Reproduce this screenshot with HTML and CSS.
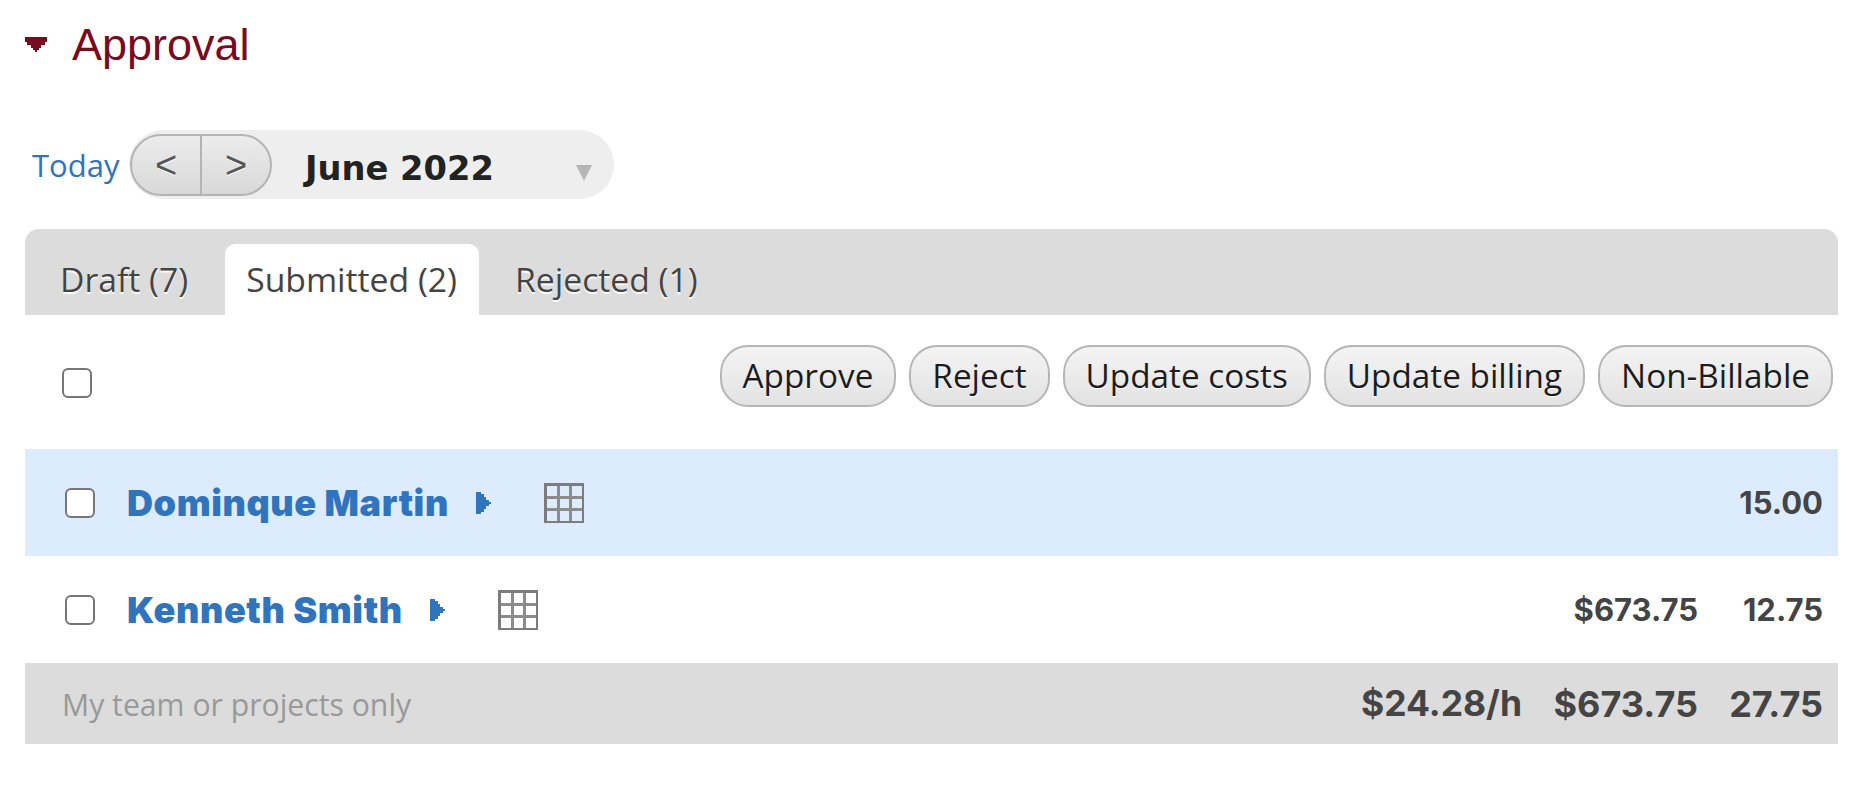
FILE: index.html
```html
<!DOCTYPE html>
<html lang="en">
<head>
<meta charset="utf-8">
<title>Approval</title>
<link rel="stylesheet" href="styles.css">
</head>
<body>
<header class="title">
  <svg class="title-caret" width="22" height="15" viewBox="0 0 22 15" shape-rendering="crispEdges"><path d="M0 0H22V5H20V8H16V11H14V13H12V15H10V13H8V11H6V8H2V5H0Z"/></svg>
  <h1>Approval</h1>
</header>
<nav class="period">
  <a class="today">Today</a>
  <div class="pill">
    <div class="stepper"><span class="step">&lt;</span><span class="step">&gt;</span></div>
    <strong class="month">June 2022</strong>
    <svg class="month-caret" width="16" height="16" viewBox="0 0 16 16"><path d="M0 0H16L8 16Z"/></svg>
  </div>
</nav>
<section class="panel">
  <div class="tabs">
    <span class="tab">Draft (7)</span>
    <span class="tab active">Submitted (2)</span>
    <span class="tab">Rejected (1)</span>
  </div>
  <div class="toolbar">
    <span class="check head-check"></span>
    <div class="actions">
      <button class="btn">Approve</button>
      <button class="btn">Reject</button>
      <button class="btn">Update costs</button>
      <button class="btn">Update billing</button>
      <button class="btn">Non-Billable</button>
    </div>
  </div>
  <div class="row hl">
    <span class="check"></span>
    <a class="name">Dominque Martin</a>
    <svg class="arrow" width="15" height="22" viewBox="0 0 15 22" shape-rendering="crispEdges"><path d="M0 0H5V2H8V5H10V8H13V10H15V12H13V14H10V17H8V20H5V22H0Z"/></svg>
    <svg class="grid" width="40" height="40" viewBox="0 0 40 40" shape-rendering="crispEdges"><path class="grid-inner" d="M14 0V40M26 0V40M0 14H40M0 26H40"/><rect class="grid-outer" x="1" y="1" width="38" height="38"/></svg>
    <span class="num amt"></span>
    <span class="num hrs">15.00</span>
  </div>
  <div class="row">
    <span class="check"></span>
    <a class="name">Kenneth Smith</a>
    <svg class="arrow" width="15" height="22" viewBox="0 0 15 22" shape-rendering="crispEdges"><path d="M0 0H5V2H8V5H10V8H13V10H15V12H13V14H10V17H8V20H5V22H0Z"/></svg>
    <svg class="grid" width="40" height="40" viewBox="0 0 40 40" shape-rendering="crispEdges"><path class="grid-inner" d="M14 0V40M26 0V40M0 14H40M0 26H40"/><rect class="grid-outer" x="1" y="1" width="38" height="38"/></svg>
    <span class="num amt">$673.75</span>
    <span class="num hrs">12.75</span>
  </div>
  <div class="totals">
    <span class="filter">My team or projects only</span>
    <span class="num total rate">$24.28/h</span>
    <span class="num total amt">$673.75</span>
    <span class="num total hrs">27.75</span>
  </div>
</section>
</body>
</html>
```
FILE: styles.css
```css
* { box-sizing: border-box; }
html, body { margin: 0; padding: 0; background: #fff; }
body { height: 790px; overflow: hidden; font-family: "Open Sans", "Liberation Sans", sans-serif; color: #444; }

.title { display: flex; align-items: center; height: 88px; margin: 0 0 42px 25px; }
.title-caret { fill: #7a0a1e; margin-right: 25px; }
.title h1 { margin: 0; font: 400 45px/1 "Liberation Sans", sans-serif; color: #7a0a1e; }

.period { display: flex; align-items: center; height: 69px; margin-bottom: 30px; padding-left: 32px; }
.today { padding-top: 2px; font-size: 31px; line-height: 1; color: #2f74bd; width: 97px; flex: none; }
.pill { display: flex; align-items: center; width: 485px; height: 69px; border-radius: 35px; background: #eeeeee; padding-left: 1px; }
.stepper { display: flex; width: 142px; height: 62px; border: 2px solid #b4b4b4; border-radius: 31px; overflow: hidden; background: linear-gradient(#ececec, #d8d8d8); flex: none; }
.step { flex: 1; display: flex; align-items: center; justify-content: center; font: 400 38px/1 "Liberation Sans", sans-serif; color: #555; text-shadow: 0 1px 0 #fff; }
.step + .step { border-left: 2px solid #b4b4b4; }
.month { margin: 8px 0 0 33px; font: 700 33.7px/1 "DejaVu Sans", sans-serif; color: #222; }
.month-caret { fill: #b5b5b5; margin-left: 82px; margin-top: 16px; }

.panel { margin: 0 22px 0 25px; }
.tabs { display: flex; align-items: flex-end; gap: 15px; height: 86px; padding-left: 14px; background: #dcdcdc; border-radius: 14px 14px 0 0; }
.tab { display: flex; align-items: center; height: 71px; padding: 0 22px 0 21px; font-size: 33.7px; line-height: 1; color: #444; text-shadow: 0 2px 1px #fff; }
.tab.active { background: #fff; border-radius: 10px 10px 0 0; text-shadow: none; }

.toolbar { display: flex; justify-content: space-between; align-items: flex-start; height: 134px; padding: 30px 5px 0 37px; }
.actions { display: flex; gap: 13px; }
.btn { height: 62px; padding: 0 21px; border: 2px solid #b6b6b6; border-radius: 28px; background: linear-gradient(#f4f4f4, #e2e2e2); font: 400 33.3px/1 "Open Sans", sans-serif; color: #1c1c1c; text-shadow: 0 1px 0 #fff; }

.check { display: block; flex: none; width: 30px; height: 30px; border: 2px solid #767676; border-radius: 6px; background: #fff; }
.head-check { margin-top: 23px; }

.row { display: flex; align-items: center; height: 107px; padding: 0 15px 0 40px; background: #fff; }
.row.hl { background: #dcebfe; }
.name { margin-left: 32px; font: 900 36px/1 Inter, sans-serif; letter-spacing: 0.6px; color: #2f74bd; }
.arrow { fill: #2f74bd; margin-left: 27px; flex: none; }
.grid { margin-left: 53px; flex: none; fill: none; }
.grid-inner { stroke: #8c8c8c; stroke-width: 3; }
.grid-outer { stroke: #7c7c7c; stroke-width: 3; }

.num { font-family: Inter, sans-serif; font-weight: 700; font-size: 31px; line-height: 1; color: #444; text-align: right; }
.amt { margin-left: auto; }
.hrs { width: 125px; flex: none; }

.totals { display: flex; align-items: center; height: 81px; padding: 0 15px 0 37px; background: #dcdcdc; }
.filter { padding-top: 3px; font-size: 30.2px; line-height: 1; color: #999; }
.total { font-size: 36px; }
.rate { margin-left: auto; width: 175px; font-size: 35.5px; }
.totals .amt { margin-left: 0; width: 176px; }
```
